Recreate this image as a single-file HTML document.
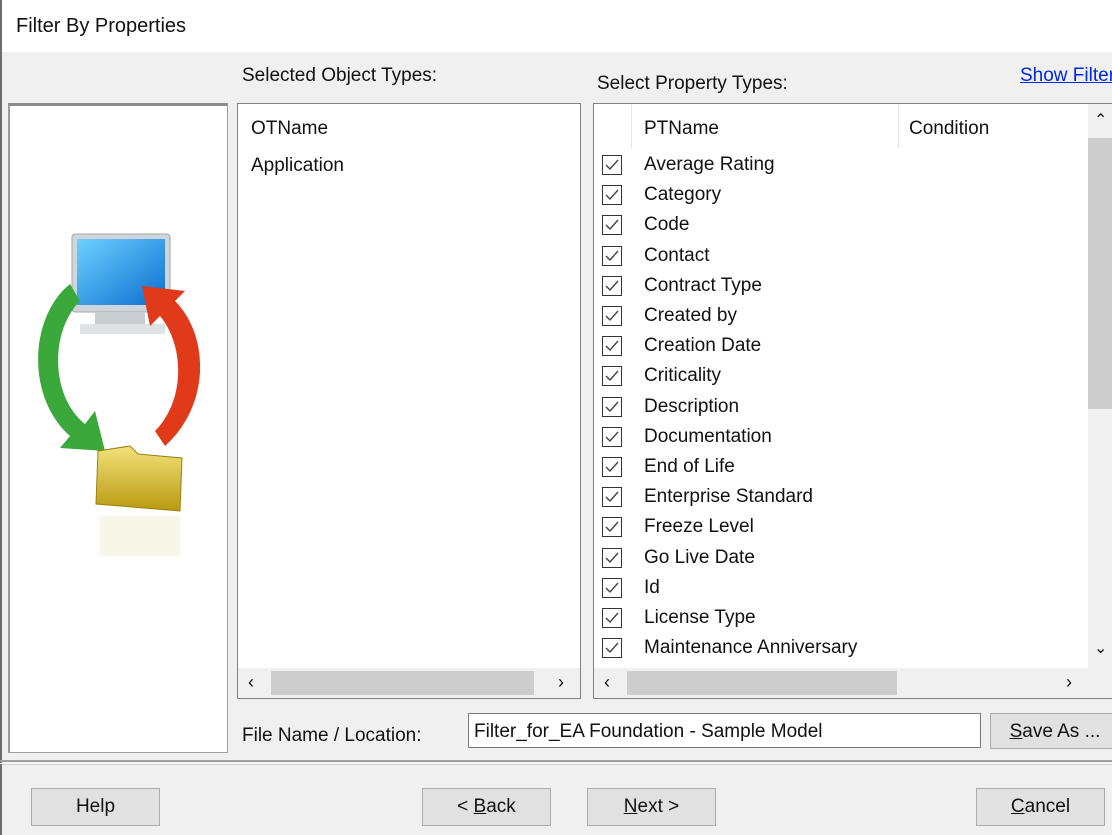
<!DOCTYPE html>
<html><head><style>
*{box-sizing:border-box;margin:0;padding:0}
body{width:1112px;height:835px;background:#f0f0f0;font-family:"Liberation Sans",sans-serif;font-size:19px;color:#111;position:relative;overflow:hidden}
.a{position:absolute;white-space:nowrap}
.box{position:absolute;background:#fff;border:1px solid #828282;overflow:hidden}
.btn{position:absolute;background:#e1e1e1;border:1px solid #adadad;text-align:center;line-height:36px;font-size:19px;white-space:nowrap;overflow:hidden}
.row{position:absolute;left:8px;height:30px;line-height:30px}
.cb{position:absolute;left:0;top:5px;width:20px;height:20px;border:1px solid #333;background:#fff}
.cb svg{position:absolute;left:1px;top:1px}
.row span{position:absolute;left:42px;white-space:nowrap}
u{text-decoration:underline}
</style></head><body>
<div class="a" style="left:0;top:0;width:1112px;height:52px;background:#fff"></div>
<div class="a" style="left:0;top:0;width:2px;height:835px;background:#6d6d6d"></div>
<div class="a" style="left:16px;top:15px;font-size:20px">Filter By Properties</div>
<div class="a" style="left:242px;top:65px">Selected Object Types:</div>
<div class="a" style="left:597px;top:73px">Select Property Types:</div>
<div class="a" style="left:1020px;top:65px;color:#0026e6;text-decoration:underline">Show Filter</div>

<div class="box" style="left:8px;top:103px;width:220px;height:650px;border-color:#a0a0a0;border-top:3px solid #8a8a8a;border-left:2px solid #9a9a9a">
<svg width="216" height="640" style="position:absolute;left:0;top:0">
<defs><linearGradient id="m" x1="0" y1="0" x2="1" y2="1"><stop offset="0" stop-color="#6fd0ff"/><stop offset="1" stop-color="#0a6fd0"/></linearGradient>
<linearGradient id="f" x1="0" y1="0" x2="0" y2="1"><stop offset="0" stop-color="#f2e27a"/><stop offset="1" stop-color="#b89a10"/></linearGradient></defs>
<rect x="62" y="128" width="98" height="78" rx="3" fill="#cfd5da" stroke="#9aa"/>
<rect x="67" y="133" width="88" height="66" fill="url(#m)"/>
<rect x="85" y="206" width="50" height="14" fill="#c8cdd2"/>
<rect x="70" y="218" width="85" height="10" fill="#dfe3e6"/>
<path d="M60 178 C20 210 15 290 60 330 L50 342 L95 345 L85 305 L75 318 C40 290 40 225 70 195 Z" fill="#3aa83a"/>
<path d="M155 340 C200 300 200 230 165 195 L175 185 L132 180 L140 220 L150 210 C175 240 175 295 145 325 Z" fill="#e03a1a"/>
<path d="M88 345 L120 340 L128 348 L172 352 L170 405 L86 398 Z" fill="url(#f)" stroke="#9a8010"/>
<rect x="90" y="410" width="80" height="40" fill="#f4f0d8" opacity=".6"/>
</svg></div>

<div class="box" style="left:237px;top:103px;width:344px;height:596px">
<div class="a" style="left:13px;top:14px">OTName</div>
<div class="a" style="left:13px;top:51px">Application</div>
<div class="a" style="left:0;top:564px;width:342px;height:30px;background:#f0f0f0"></div>
<div class="a" style="left:33px;top:567px;width:263px;height:24px;background:#cdcdcd"></div>
<div class="a" style="left:10px;top:568px;font-size:18px">&#8249;</div>
<div class="a" style="left:320px;top:568px;font-size:18px">&#8250;</div>
</div>

<div class="box" style="left:593px;top:103px;width:530px;height:596px">
<div class="a" style="left:37px;top:0;width:1px;height:44px;background:#e5e5e5"></div>
<div class="a" style="left:304px;top:0;width:1px;height:44px;background:#e5e5e5"></div>
<div class="a" style="left:50px;top:14px">PTName</div>
<div class="a" style="left:315px;top:14px">Condition</div>
<div class="a" style="left:494px;top:0;width:24px;height:564px;background:#f0f0f0"></div>
<div class="a" style="left:494px;top:34px;width:24px;height:271px;background:#cdcdcd"></div>
<div class="a" style="left:500px;top:6px;font-size:16px">&#8963;</div>
<div class="a" style="left:500px;top:534px;font-size:16px">&#8964;</div>
<div class="a" style="left:0;top:564px;width:520px;height:30px;background:#f0f0f0"></div>
<div class="a" style="left:33px;top:567px;width:270px;height:24px;background:#cdcdcd"></div>
<div class="a" style="left:10px;top:568px;font-size:18px">&#8249;</div>
<div class="a" style="left:472px;top:568px;font-size:18px">&#8250;</div>
<div id="rows"></div>
</div>

<div class="a" style="left:242px;top:725px">File Name / Location:</div>
<div class="box" style="left:468px;top:713px;width:513px;height:35px;border-color:#7a7a7a">
<div class="a" style="left:5px;top:7px">Filter_for_EA Foundation - Sample Model</div></div>
<div class="btn" style="left:990px;top:713px;width:130px;height:36px"><u>S</u>ave As ...</div>

<div class="a" style="left:0;top:760px;width:1112px;height:4px;border-top:2px solid #a0a0a0;border-bottom:1px solid #fff"></div>
<div class="a" style="left:2px;top:764px;width:1110px;height:1px;background:#d0d0d0"></div>

<div class="btn" style="left:31px;top:788px;width:129px;height:38px">Help</div>
<div class="btn" style="left:422px;top:788px;width:129px;height:38px">&lt; <u>B</u>ack</div>
<div class="btn" style="left:587px;top:788px;width:129px;height:38px"><u>N</u>ext &gt;</div>
<div class="btn" style="left:976px;top:788px;width:129px;height:38px"><u>C</u>ancel</div>

<script>
var n=["Average Rating","Category","Code","Contact","Contract Type","Created by","Creation Date","Criticality","Description","Documentation","End of Life","Enterprise Standard","Freeze Level","Go Live Date","Id","License Type","Maintenance Anniversary"];
var h="";n.forEach(function(t,i){h+='<div class="row" style="top:'+(46+i*30.2)+'px"><div class="cb"><svg width="16" height="16"><path d="M2 8 L6 12 L14 3" fill="none" stroke="#444" stroke-width="1.4"/></svg></div><span>'+t+'</span></div>';});
document.getElementById("rows").innerHTML=h;
</script>
</body></html>
